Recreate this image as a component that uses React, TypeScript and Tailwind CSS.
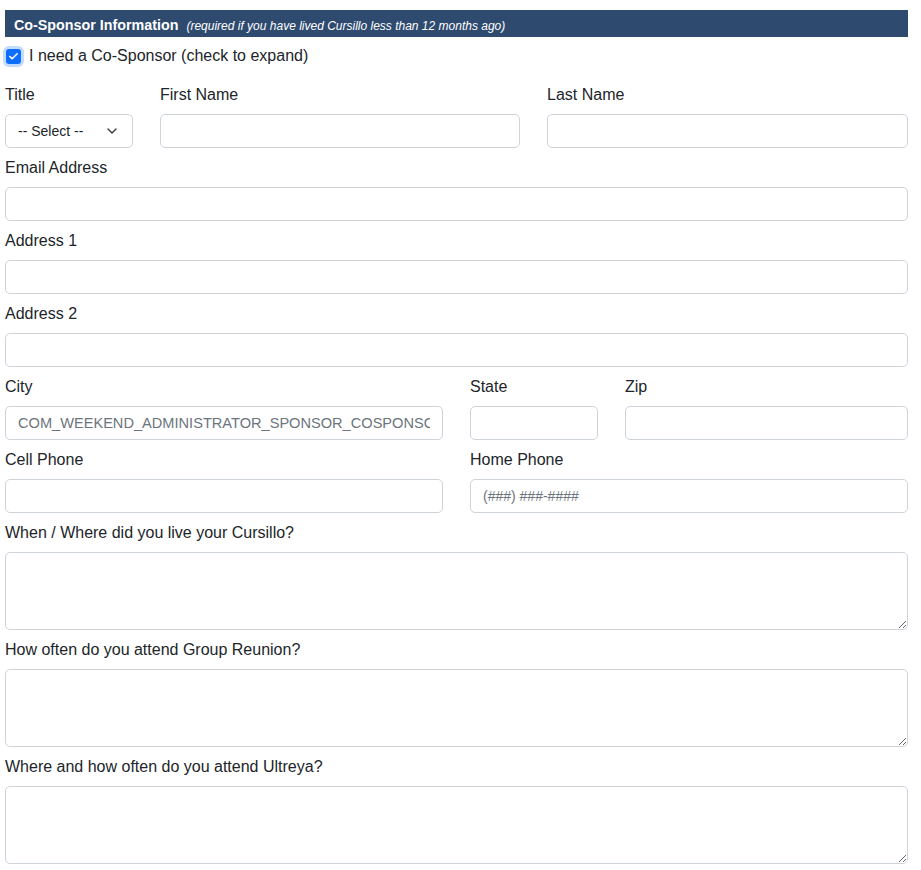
import { ChevronDown, Check } from "lucide-react";

const inputCls =
  "block w-full h-[34px] rounded-[5px] border border-[#ced4da] bg-white px-3 text-[14.6px] text-[#6c757d] outline-none";

const Field = ({ label, children }: { label: string; children: React.ReactNode }) => (
  <div className="flex flex-col">
    <label className="text-[16px] leading-6 text-[#212529] mb-[7px]">{label}</label>
    {children}
  </div>
);

const Area = ({ label }: { label: string }) => (
  <Field label={label}>
    <textarea className="block w-full h-[78px] rounded-[5px] border border-[#ced4da] bg-white px-3 py-1.5 outline-none" />
  </Field>
);

const App = () => {
  return (
    <div className="w-[921px] bg-white px-[5px] pt-[10px] pb-2 font-['Liberation_Sans',Arial,sans-serif] text-[#212529]">
      {/* section header */}
      <div className="flex items-baseline h-[27px] w-[903px] bg-[#2e4a6f] pl-[9px] pt-[5px]">
        <span className="text-[14.3px] font-bold text-white">Co-Sponsor Information</span>
        <span className="ml-2 text-[12px] italic text-white">
          (required if you have lived Cursillo less than 12 months ago)
        </span>
      </div>

      <div className="flex items-center mt-[11px] h-[16px]">
        <span className="ml-[1px] flex h-[15px] w-[15px] items-center justify-center rounded-[3px] bg-[#0d6efd] ring-[3px] ring-[#c2dbfe]">
          <Check className="h-[11px] w-[11px] text-white" strokeWidth={3.5} />
        </span>
        <span className="ml-2 text-[16px] leading-6">I need a Co-Sponsor (check to expand)</span>
      </div>

      <div className="flex w-[903px] flex-col gap-[8px] mt-[19px]">
        <div className="grid grid-cols-[128px_360px_361px] gap-x-[27px]">
          <Field label="Title">
            <div className={inputCls + " flex items-center justify-between !text-[14px] !text-[#212529]"}>
              <span>-- Select --</span>
              <ChevronDown className="h-4 w-4 text-[#343a40]" strokeWidth={2} />
            </div>
          </Field>
          <Field label="First Name">
            <input className={inputCls} />
          </Field>
          <Field label="Last Name">
            <input className={inputCls} />
          </Field>
        </div>

        <Field label="Email Address">
          <input className={inputCls} />
        </Field>
        <Field label="Address 1">
          <input className={inputCls} />
        </Field>
        <Field label="Address 2">
          <input className={inputCls} />
        </Field>

        <div className="grid grid-cols-[438px_128px_283px] gap-x-[27px]">
          <Field label="City">
            <input className={inputCls} readOnly value="COM_WEEKEND_ADMINISTRATOR_SPONSOR_COSPONSOR_CITY" />
          </Field>
          <Field label="State">
            <input className={inputCls} />
          </Field>
          <Field label="Zip">
            <input className={inputCls} />
          </Field>
        </div>

        <div className="grid grid-cols-[438px_438px] gap-x-[27px]">
          <Field label="Cell Phone">
            <input className={inputCls} />
          </Field>
          <Field label="Home Phone">
            <input className={inputCls + " !text-[14px] placeholder:text-[#6c757d]"} placeholder="(###) ###-####" />
          </Field>
        </div>

        <Area label="When / Where did you live your Cursillo?" />
        <Area label="How often do you attend Group Reunion?" />
        <Area label="Where and how often do you attend Ultreya?" />
      </div>
    </div>
  );
};

export default App;
